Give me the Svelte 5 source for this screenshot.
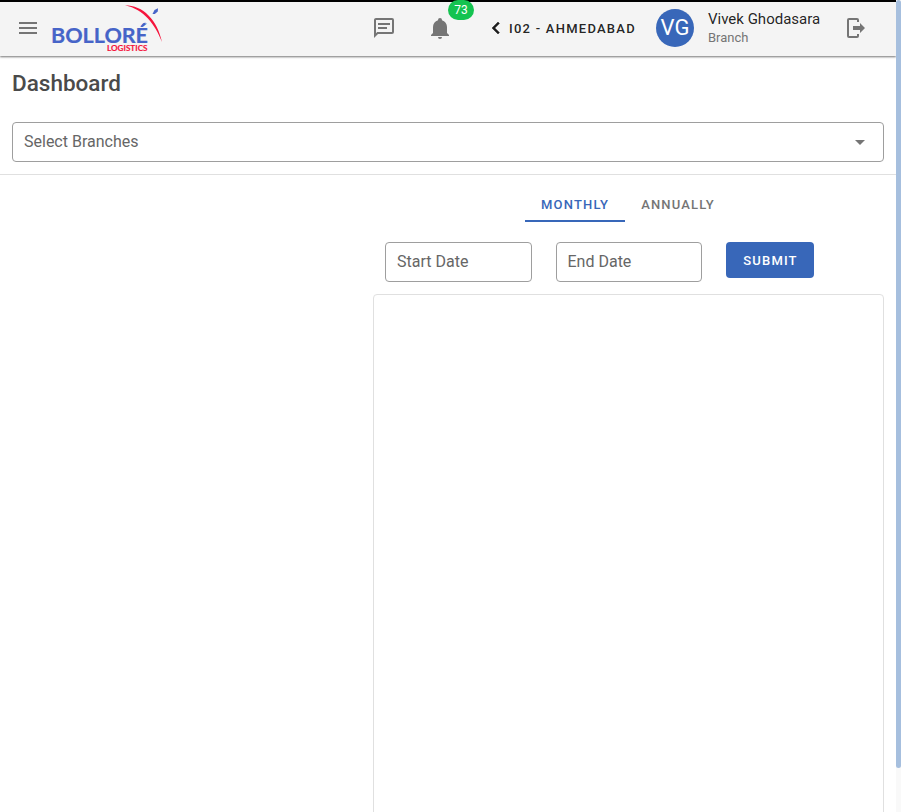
<script>
  const tabs = ['Monthly', 'Annually'];
  let active = $state(0);
</script>

<div class="app">
  <header>
    <svg class="icon menu" viewBox="0 0 24 24"><path d="M3,6H21V8H3V6M3,11H21V13H3V11M3,16H21V18H3V16Z" /></svg>
    <svg class="logo" viewBox="0 0 116 52" role="img" aria-label="Bolloré Logistics">
      <text x="1" y="40.9" class="brand" textLength="97" lengthAdjust="spacingAndGlyphs">BOLLORÉ</text>
      <text x="57" y="48.8" class="sub" textLength="40.5" lengthAdjust="spacingAndGlyphs">LOGISTICS</text>
      <path d="M90.500 25L93.300 21.200L95.500 20.400L94.800 22.800L92.500 25Z" fill="#4664c8" />
      <path d="M75 3.200C93 3.200 107.500 18 112 40C105 22 94 7.500 75 3.200Z" fill="#f5143c" />
      <path d="M102.500 12L104.500 8L108 6.200L107.800 9.500L104.800 12Z" fill="#4664c8" />
    </svg>
    <span class="spacer"></span>
    <svg class="icon message" viewBox="0 0 24 24"><path d="M20,2A2,2 0 0,1 22,4V16A2,2 0 0,1 20,18H6L2,22V4C2,2.89 2.9,2 4,2H20M4,4V17.17L5.17,16H20V4H4M6,7H18V9H6V7M6,11H15V13H6V11Z" /></svg>
    <div class="bell">
      <svg class="icon" viewBox="0 0 24 24"><path d="M21,19V20H3V19L5,17V11C5,7.9 7.03,5.17 10,4.29C10,4.19 10,4.1 10,4A2,2 0 0,1 12,2A2,2 0 0,1 14,4C14,4.1 14,4.19 14,4.29C16.97,5.17 19,7.9 19,11V17L21,19M14,21A2,2 0 0,1 12,23A2,2 0 0,1 10,21" /></svg>
      <span class="badge">73</span>
    </div>
    <button class="branch">
      <svg class="chevron" viewBox="0 0 24 24"><path d="M15.41,16.58L10.83,12L15.41,7.41L14,6L8,12L14,18L15.41,16.58Z" /></svg>
      <span>I02 - AHMEDABAD</span>
    </button>
    <div class="avatar">VG</div>
    <div class="user">
      <div class="name">Vivek Ghodasara</div>
      <div class="role">Branch</div>
    </div>
    <svg class="icon logout" viewBox="0 0 24 24"><path d="M15 6V4A2 2 0 0 0 13 2H5A2 2 0 0 0 3 4V20A2 2 0 0 0 5 22H13A2 2 0 0 0 15 20V18H13V20H5V4H13V6ZM9 10H16V7L21 12L16 17V14H9Z" /></svg>
  </header>

  <main>
    <section class="top">
      <h1>Dashboard</h1>
      <div class="field select">
        <span>Select Branches</span>
        <svg class="icon" viewBox="0 0 24 24"><path d="M7,10L12,15L17,10H7Z" /></svg>
      </div>
    </section>
    <section class="content">
      <div class="panel">
        <nav>
          {#each tabs as tab, i}
            <button class="tab" class:active={active === i} onclick={() => (active = i)}>{tab}</button>
          {/each}
        </nav>
        <div class="filters">
          <div class="field date">Start Date</div>
          <div class="field date">End Date</div>
          <button class="submit">Submit</button>
        </div>
        <div class="chart"></div>
      </div>
    </section>
  </main>
  <div class="scrollbar"><div class="thumb"></div></div>
</div>

<style>
  :global(body) { margin: 0; overflow: hidden; }
  .app {
    position: relative;
    display: flex;
    flex-direction: column;
    width: 901px;
    height: 812px;
    overflow: hidden;
    box-sizing: border-box;
    padding-right: 5px;
    background: #fff;
    color: rgba(0, 0, 0, 0.87);
    font-family: Roboto, sans-serif;
  }
  button { border: 0; background: none; font-family: inherit; padding: 0; color: inherit; }
  header {
    display: flex;
    align-items: center;
    flex: none;
    height: 56px;
    box-sizing: border-box;
    border-top: 2px solid #000;
    padding: 0 28px 2px 16px;
    background: #f4f4f4;
    box-shadow: 0 1px 2px rgba(0, 0, 0, 0.55);
  }
  .icon { width: 24px; height: 24px; flex: none; fill: #757575; display: block; }
  .logo { width: 116px; height: 52px; margin-left: 10px; flex: none; }
  .brand { font: 700 20px Lato, sans-serif; fill: #4664c8; stroke: #4664c8; stroke-width: 0.2px; }
  .sub { font: 700 7.4px Lato, sans-serif; fill: #f5143c; stroke: #f5143c; stroke-width: 0.15px; }
  .spacer { flex: 1; }
  .bell { position: relative; margin-left: 32px; }
  .badge {
    position: absolute;
    left: 20px;
    top: -16px;
    width: 26px;
    height: 20px;
    border-radius: 10px;
    background: #14c350;
    color: #fff;
    font-size: 12px;
    line-height: 20px;
    text-align: center;
  }
  .branch { display: flex; align-items: center; margin-left: 32px; width: 152px; font-size: 13px; font-weight: 500; letter-spacing: 1.25px; white-space: nowrap; }
  .chevron { width: 24px; height: 24px; flex: none; fill: #1d1d1d; stroke: #1d1d1d; stroke-width: 0.5; }
  .branch span { margin-left: 1px; }
  .avatar { width: 38px; height: 38px; margin-left: 20px; flex: none; border-radius: 50%; background: #3867b9; color: #fff; font-size: 22px; line-height: 38px; text-align: center; }
  .user { margin-left: 14px; width: 136px; }
  .name { font-size: 15px; line-height: 19px; }
  .role { font-size: 13px; line-height: 18px; color: #757575; }
  .top { padding: 11px 12px 12px; border-bottom: 1px solid #e0e0e0; }
  h1 { margin: 0 0 23px; font-size: 22.5px; line-height: 32px; font-weight: 500; color: #4a4a4a; }
  .field { box-sizing: border-box; height: 40px; border: 1px solid #9e9e9e; border-radius: 4px; padding: 0 11px; font-size: 16px; line-height: 38px; color: #666; }
  .select { display: flex; align-items: center; justify-content: space-between; }
  .content { display: flex; justify-content: flex-end; padding: 12px 12px 0; }
  .panel { width: 511px; }
  nav { display: flex; justify-content: center; height: 35px; padding-right: 1px; }
  .tab { padding: 2px 16px 0; height: 35px; box-sizing: border-box; border-bottom: 2px solid transparent; font-size: 13px; font-weight: 500; letter-spacing: 1.17px; text-transform: uppercase; color: #757575; }
  .tab.active { color: #3867b9; border-color: #3867b9; }
  .filters { display: flex; margin-top: 20px; padding: 0 12px; gap: 24px; }
  .date { width: 146.5px; }
  .submit { width: 88px; height: 36px; border-radius: 4px; background: #3867b9; color: #fff; font-size: 13px; font-weight: 500; letter-spacing: 1.17px; text-transform: uppercase; padding-left: 1px; }
  .chart { margin-top: 12px; height: 600px; box-sizing: border-box; border: 1px solid #e0e0e0; border-radius: 4px; }
  .scrollbar { position: absolute; right: 0; top: 0; width: 5px; height: 812px; background: #f9f9f9; }
  .thumb { height: 768px; border-radius: 3px; background: #a6bfde; }
</style>
